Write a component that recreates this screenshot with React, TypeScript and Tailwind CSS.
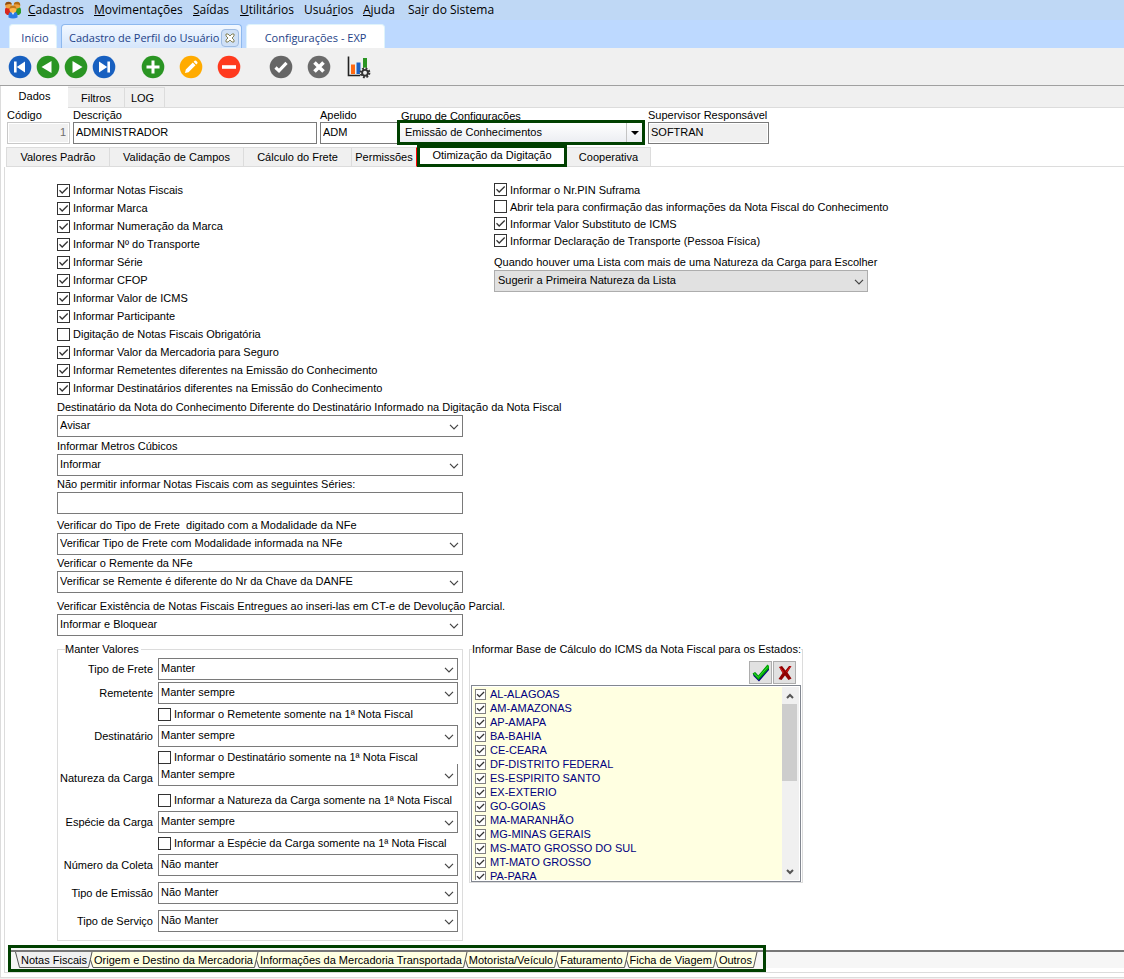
import { useState } from 'react';
import clsx from 'clsx';

const menuItems = [
  { before: '', key: 'C', after: 'adastros', width: 'w-[66px]' },
  { before: '', key: 'M', after: 'ovimentações', width: 'w-[99px]' },
  { before: '', key: 'S', after: 'aídas', width: 'w-[47px]' },
  { before: '', key: 'U', after: 'tilitários', width: 'w-[64px]' },
  { before: 'Usuá', key: 'r', after: 'ios', width: 'w-[59px]' },
  { before: '', key: 'A', after: 'juda', width: 'w-[45px]' },
  { before: 'Sa', key: 'i', after: 'r do Sistema', width: 'w-[90px]' },
];

const profileTabs = [
  { label: 'Valores Padrão', width: 'w-[104px]' },
  { label: 'Validação de Campos', width: 'w-[134px]' },
  { label: 'Cálculo do Frete', width: 'w-[108px]' },
  { label: 'Permissões', width: 'w-[65px]' },
  { label: 'Otimização da Digitação', width: 'w-[150px]' },
  { label: 'Cooperativa', width: 'w-[84px]' },
];

const leftChecks = [
  { label: 'Informar Notas Fiscais', checked: true },
  { label: 'Informar Marca', checked: true },
  { label: 'Informar Numeração da Marca', checked: true },
  { label: 'Informar Nº do Transporte', checked: true },
  { label: 'Informar Série', checked: true },
  { label: 'Informar CFOP', checked: true },
  { label: 'Informar Valor de ICMS', checked: true },
  { label: 'Informar Participante', checked: true },
  { label: 'Digitação de Notas Fiscais Obrigatória', checked: false },
  { label: 'Informar Valor da Mercadoria para Seguro', checked: true },
  { label: 'Informar Remetentes diferentes na Emissão do Conhecimento', checked: true },
  { label: 'Informar Destinatários diferentes na Emissão do Conhecimento', checked: true },
];

const rightChecks = [
  { label: 'Informar o Nr.PIN Suframa', checked: true },
  { label: 'Abrir tela para confirmação das informações da Nota Fiscal do Conhecimento', checked: false },
  { label: 'Informar Valor Substituto de ICMS', checked: true },
  { label: 'Informar Declaração de Transporte (Pessoa Física)', checked: true },
];

const states = [
  'AL-ALAGOAS',
  'AM-AMAZONAS',
  'AP-AMAPA',
  'BA-BAHIA',
  'CE-CEARA',
  'DF-DISTRITO FEDERAL',
  'ES-ESPIRITO SANTO',
  'EX-EXTERIO',
  'GO-GOIAS',
  'MA-MARANHÃO',
  'MG-MINAS GERAIS',
  'MS-MATO GROSSO DO SUL',
  'MT-MATO GROSSO',
  'PA-PARA',
];

const sheets = [
  'Notas Fiscais',
  'Origem e Destino da Mercadoria',
  'Informações da Mercadoria Transportada',
  'Motorista/Veículo',
  'Faturamento',
  'Ficha de Viagem',
  'Outros',
];

function Check({ label, checked, small }: { label: string; checked?: boolean; small?: boolean }) {
  return (
    <label className={clsx('flex items-center whitespace-nowrap', small ? 'gap-1 text-[#000080]' : 'gap-[3px]')}>
      <span className={clsx('relative shrink-0', small ? 'size-[11px]' : 'size-[13px]')}>
        <input
          type="checkbox"
          defaultChecked={checked}
          className={clsx('peer block size-full appearance-none border bg-white', small ? 'border-[#808080]' : 'border-[#333]')}
        />
        <svg viewBox="0 0 13 13" className="pointer-events-none absolute inset-0 hidden size-full peer-checked:block">
          <path d="M2.5 6.3 5.2 9 10.7 3.5" fill="none" stroke="#333" strokeWidth={small ? 1.6 : 1.3} />
        </svg>
      </span>
      <span>{label}</span>
    </label>
  );
}

function Combo({ id, value, gray, noTop }: { id: string; value: string; gray?: boolean; noTop?: boolean }) {
  return (
    <div className="relative">
      <select
        id={id}
        className={clsx(
          'block h-[22px] w-full appearance-none border pb-0.5 text-[11px]',
          gray ? 'border-[#adadad] bg-[#e1e1e1] pl-[3px]' : 'border-[#7a7a7a] bg-white pl-0.5',
          noTop && 'border-t-0',
        )}
      >
        <option>{value}</option>
      </select>
      <svg viewBox="0 0 10 6" className="pointer-events-none absolute top-[9px] right-1 h-[6px] w-[10px]">
        <path d="M1 .8 5 4.8 9 .8" fill="none" stroke="#444" strokeWidth="1.2" />
      </svg>
    </div>
  );
}

function Field({ id, label, value, className }: { id: string; label: string; value: string; className?: string }) {
  return (
    <div className={clsx('flex w-[406px] flex-col gap-px', className)}>
      <label htmlFor={id} className="h-[14px] whitespace-pre">{label}</label>
      <Combo id={id} value={value} />
    </div>
  );
}

function KeepRow({ id, label, value, noTop }: { id: string; label: string; value: string; noTop?: boolean }) {
  return (
    <div className="grid grid-cols-[95px_1fr] items-center gap-[5px]">
      <label htmlFor={id} className={clsx('text-right whitespace-nowrap', noTop ? 'pt-1.5' : 'pb-px')}>{label}</label>
      <Combo id={id} value={value} noTop={noTop} />
    </div>
  );
}

function RoundIcon({ color, children }: { color: string; children: React.ReactNode }) {
  return (
    <svg viewBox="0 0 24 24" className="size-6">
      <circle cx="12" cy="12" r="11.3" fill={color} />
      {children}
    </svg>
  );
}

function PeopleLogo() {
  return (
    <svg viewBox="0 0 18 18" className="h-[18px] w-[18px]">
      <path d="M1 12V9q0-3 3-3h2q2 0 2 3v5H3z" fill="#d8261c" />
      <path d="M10 14V9q0-3 2-3h2q3 0 3 3v3l-2 2z" fill="#2f9a2b" />
      <circle cx="4.5" cy="4.2" r="3.2" fill="#f0a13c" />
      <path d="M1.2 4.2Q1 .8 4.6.8q3 0 3.2 2.6Q5 2.6 3 3.4z" fill="#8f4d10" />
      <circle cx="13" cy="4.2" r="3.2" fill="#f0a13c" />
      <path d="M9.7 3.6Q10 .8 13.2.8q3.2.2 3 3.6-3-1.6-6.5-.8z" fill="#b06a12" />
      <path d="M4.5 16.5V14q0-3 3-3h3q3 0 3 3v2.5Q9 18.5 4.5 16.5z" fill="#2c7be5" />
      <path d="m7.5 11 1.5 3 1.5-3z" fill="#fff" />
      <circle cx="9" cy="8.3" r="3.5" fill="#ffb74d" />
      <path d="M5.5 7.8Q5.8 4.6 9 4.6t3.5 3.2Q9 6 5.5 7.8z" fill="#c07a1c" />
    </svg>
  );
}

function ChartGear() {
  return (
    <svg viewBox="0 0 24 24" className="size-6">
      <path d="M1.5 1.5v19H13" fill="none" stroke="#222" strokeWidth="1.6" />
      <rect x="4" y="9.5" width="4" height="9.5" fill="#ff6a13" />
      <rect x="9.5" y="7.5" width="4" height="11.5" fill="#1c62c4" />
      <rect x="16" y="3" width="4" height="11" fill="#2a9523" />
      <circle cx="18" cy="17.8" r="5.2" fill="#efefef" />
      <circle cx="18" cy="17.8" r="4.3" fill="none" stroke="#333" strokeWidth="2.2" strokeDasharray="1.8 1.577" />
      <circle cx="18" cy="17.8" r="2.9" fill="#efefef" stroke="#333" strokeWidth="1.9" />
    </svg>
  );
}

function Slant({ left, right }: { left: string; right?: string }) {
  return (
    <svg viewBox="0 0 7 16" className="h-4 w-[7px] shrink-0">
      <path d="M0 0H5L1.5 15.5H0z" fill={left} />
      {right && <path d="M5 0H7V15.5H6L3.5 8z" fill={right} />}
      <path d="M0 15.5H1.5L5 0" fill="none" stroke="#555" />
      {right && <path d="M3.5 8 6 15.500H7" fill="none" stroke="#555" />}
    </svg>
  );
}

export default function App() {
  const [sheet, setSheet] = useState(0);
  const sheetColor = (i: number) => (sheet === i ? '#f0f0f0' : '#ffffe1');

  return (
    <div className="flex min-h-screen flex-col overflow-hidden bg-[#f0f0f0] font-['Liberation_Sans',Arial,sans-serif] text-[11px] leading-[14px] text-black">
      {/* Menu */}
      <nav className="flex h-5 items-center bg-[#bfd8f5] pl-1 font-['Open_Sans','Segoe_UI',sans-serif] text-[12px]">
        <PeopleLogo />
        <div className="ml-1.5 flex">
          {menuItems.map((item) => (
            <button key={item.after} className={clsx('text-left whitespace-nowrap', item.width)}>
              {item.before}<u>{item.key}</u>{item.after}
            </button>
          ))}
        </div>
      </nav>

      {/* Open windows */}
      <div className="flex h-7 items-end gap-1 bg-[#bdd9ff] pl-[9px] font-['Open_Sans','Segoe_UI',sans-serif] text-[11px] text-[#1e4287]">
        <button className="h-6 w-12 rounded-t-sm border border-b-0 border-[#dff3fb] bg-white pt-0.5 pl-1">Início</button>
        <div className="flex h-6 w-[181px] items-center justify-between rounded-t-sm border border-b-0 border-[#8db8ee] bg-gradient-to-b from-[#f3f8ff] to-[#d5e6fb] pr-0.5 pl-[7px]">
          <button className="pt-0.5 whitespace-nowrap">Cadastro de Perfil do Usuário</button>
          <button aria-label="Fechar" className="mt-0.5 flex size-[18px] shrink-0 items-center justify-center rounded-sm border border-[#9ebbe2] bg-[#cfe0f6]">
            <svg viewBox="0 0 10 10" className="size-2.5">
              <path d="M1 1h2l2 2 2-2h2v2L7 5l2 2v2H7L5 7 3 9H1V7l2-2-2-2z" fill="#fff" stroke="#7a7748" strokeWidth=".9" />
            </svg>
          </button>
        </div>
        <button className="h-6 w-[139px] rounded-t-sm border border-b-0 border-[#dff3fb] bg-white pt-0.5">Configurações - EXP</button>
      </div>

      {/* Toolbar */}
      <div className="flex h-[38px] items-center border-b border-[#a0a0a0] pl-2">
        <div className="flex gap-1">
          <button aria-label="Primeiro">
            <RoundIcon color="#1860c0"><path d="M6 6.500h2.600v11H6zM8.800 12 17 6.500v11z" fill="#fff" /></RoundIcon>
          </button>
          <button aria-label="Anterior">
            <RoundIcon color="#2a9523"><path d="M5.500 12 15.500 6v12z" fill="#fff" /></RoundIcon>
          </button>
          <button aria-label="Próximo">
            <RoundIcon color="#2a9523"><path d="M18.500 12 8.500 6v12z" fill="#fff" /></RoundIcon>
          </button>
          <button aria-label="Último">
            <RoundIcon color="#1860c0"><path d="M15.400 6.500H18v11h-2.600zM15.200 12 7 6.500v11z" fill="#fff" /></RoundIcon>
          </button>
        </div>
        <div className="ml-[25px] flex gap-3.5">
          <button aria-label="Novo">
            <RoundIcon color="#2a9523"><path d="M12 5.500v13M5.500 12h13" stroke="#fff" strokeWidth="3" /></RoundIcon>
          </button>
          <button aria-label="Editar">
            <RoundIcon color="#ffab00">
              <path d="m6 18 .8-3.500 7-7 2.700 2.700-7 7zM14.600 6.700l1-1q.8-.6 1.500 0l1.200 1.200q.6.700 0 1.500l-1 1z" fill="#fff" />
            </RoundIcon>
          </button>
          <button aria-label="Excluir">
            <RoundIcon color="#ff3a1e"><path d="M5 12h14" stroke="#fff" strokeWidth="3.600" /></RoundIcon>
          </button>
        </div>
        <div className="ml-7 flex gap-3.5">
          <button aria-label="Confirmar">
            <RoundIcon color="#666"><path d="m6.500 12.500 3.500 3.300 7.500-8" fill="none" stroke="#fff" strokeWidth="3.200" /></RoundIcon>
          </button>
          <button aria-label="Cancelar">
            <RoundIcon color="#6b6b6b"><path d="m7.500 7.500 9 9m0-9-9 9" stroke="#fff" strokeWidth="3.600" /></RoundIcon>
          </button>
        </div>
        <button aria-label="Relatórios" className="ml-4"><ChartGear /></button>
      </div>

      {/* Record tabs */}
      <div className="flex h-[22px] items-end">
        <button className="h-[22px] w-[68px] border-l border-[#dcdcdc] bg-white pb-0.5">Dados</button>
        <div className="flex h-[21px] flex-1 border-b border-[#dcdcdc]">
          <button className="w-[57px] border-t border-r border-[#dcdcdc]">Filtros</button>
          <button className="w-10 border-t border-r border-[#dcdcdc] pr-1">LOG</button>
        </div>
      </div>

      <main className="flex flex-1 flex-col border-b border-l border-[#dcdcdc] bg-white">
        {/* Record header */}
        <div className="flex items-start gap-[3px] pl-1.5">
          <div className="flex w-[63px] flex-col">
            <label htmlFor="codigo">Código</label>
            <input id="codigo" disabled defaultValue="1" className="h-[22px] border border-[#c8c8c8] bg-[#f0f0f0] px-[3px] pb-0.5 text-right text-[#6d6d6d] ring-1 ring-white ring-inset" />
          </div>
          <div className="flex w-[244px] flex-col">
            <label htmlFor="descricao">Descrição</label>
            <input id="descricao" defaultValue="ADMINISTRADOR" className="h-[22px] border border-[#7a7a7a] px-0.5 pb-0.5" />
          </div>
          <div className="flex">
            <div className="flex w-[77px] flex-col">
              <label htmlFor="apelido">Apelido</label>
              <input id="apelido" defaultValue="ADM" className="h-[22px] border border-r-0 border-[#7a7a7a] px-0.5 pb-0.5" />
            </div>
            <div className="flex w-[248px] flex-col">
              <label htmlFor="grupo" className="h-3 pt-px pl-1">Grupo de Configurações</label>
              <div className="relative">
                <select id="grupo" className="block h-[25px] w-full appearance-none border-3 border-[#004000] bg-gradient-to-b from-white to-[#eceef2] pb-0.5 pl-[5px] text-[11px]">
                  <option>Emissão de Conhecimentos</option>
                </select>
                <span className="pointer-events-none absolute top-[3px] right-[3px] flex h-[19px] w-4 items-center justify-center border-l border-[#c4c4c4]">
                  <span className="border-x-4 border-t-4 border-x-transparent border-t-black" />
                </span>
              </div>
            </div>
          </div>
          <div className="flex w-[121px] flex-col">
            <label htmlFor="supervisor" className="whitespace-nowrap">Supervisor Responsável</label>
            <input id="supervisor" readOnly defaultValue="SOFTRAN" className="h-[22px] border border-[#7a7a7a] bg-[#f0f0f0] px-0.5 pb-0.5 ring-1 ring-white ring-inset" />
          </div>
        </div>

        {/* Profile tabs */}
        <div className="flex h-[22px] items-end pl-[5px]">
          {profileTabs.map((tab, i) =>
            i === 4 ? (
              <button key={tab.label} className={clsx('h-[22px] border-3 border-[#004000] bg-white pb-0.5 whitespace-nowrap', tab.width)}>
                {tab.label}
              </button>
            ) : (
              <button
                key={tab.label}
                className={clsx('h-5 border-t border-r border-b border-[#dcdcdc] bg-[#f0f0f0] whitespace-nowrap', tab.width, i === 0 && 'border-l', i === 3 && 'border-r-[#ff0000]')}
              >
                {tab.label}
              </button>
            ),
          )}
          <div className="flex-1 border-b border-[#dcdcdc]" />
        </div>

        <section className="mb-1 ml-[3px] flex flex-1 flex-col border-b border-l border-[#dcdcdc]">
          <div className="grid grid-cols-[437px_1fr] pt-3.5 pl-[52px]">
            <div>
              {leftChecks.map((item) => (
                <div key={item.label} className="flex h-[18px] items-center">
                  <Check {...item} />
                </div>
              ))}
              <Field id="destinatario-nota" className="mt-[3px]" label="Destinatário da Nota do Conhecimento Diferente do Destinatário Informado na Digitação da Nota Fiscal" value="Avisar" />
              <Field id="metros" className="mt-0.5" label="Informar Metros Cúbicos" value="Informar" />
              <div className="mt-px flex w-[406px] flex-col gap-px">
                <label htmlFor="series" className="h-[14px]">Não permitir informar Notas Fiscais com as seguintes Séries:</label>
                <input id="series" className="h-[22px] border border-[#7a7a7a] px-0.5" />
              </div>
              <Field id="tipo-frete-nfe" className="mt-1" label="Verificar do Tipo de Frete  digitado com a Modalidade da NFe" value="Verificar Tipo de Frete com Modalidade informada na NFe" />
              <Field id="remente" className="mt-px" label="Verificar o Remente da NFe" value="Verificar se Remente é diferente do Nr da Chave da DANFE" />
              <Field id="existencia" className="mt-1.5" label="Verificar Existência de Notas Fiscais Entregues ao inseri-las em CT-e de Devolução Parcial." value="Informar e Bloquear" />
            </div>

            <div>
              {rightChecks.map((item) => (
                <div key={item.label} className="flex h-[17px] items-center">
                  <Check {...item} />
                </div>
              ))}
              <div className="mt-1.5 flex w-[374px] flex-col gap-px">
                <label htmlFor="natureza-lista" className="h-[14px] whitespace-nowrap">Quando houver uma Lista com mais de uma Natureza da Carga para Escolher</label>
                <Combo id="natureza-lista" value="Sugerir a Primeira Natureza da Lista" gray />
              </div>
            </div>
          </div>

          <div className="mt-1.5 flex items-start gap-1.5 pl-[52px]">
            <fieldset className="w-[406px] border border-[#dcdcdc] pr-1 pb-2">
              <legend className="ml-[7px] pr-0.5">Manter Valores</legend>
              <div className="flex flex-col gap-0.5 pt-0.5">
                <KeepRow id="k-frete" label="Tipo de Frete" value="Manter" />
                <KeepRow id="k-remetente" label="Remetente" value="Manter sempre" />
              </div>
              <div className="flex h-[21px] items-end pb-1 pl-[100px]"><Check label="Informar o Remetente somente na 1ª Nota Fiscal" /></div>
              <KeepRow id="k-destinatario" label="Destinatário" value="Manter sempre" />
              <div className="flex h-[17px] items-end pl-[100px]"><Check label="Informar o Destinatário somente na 1ª Nota Fiscal" /></div>
              <KeepRow id="k-natureza" label="Natureza da Carga" value="Manter sempre" noTop />
              <div className="flex h-[25px] items-end pb-1 pl-[100px]"><Check label="Informar a Natureza da Carga somente na 1ª Nota Fiscal" /></div>
              <KeepRow id="k-especie" label="Espécie da Carga" value="Manter sempre" />
              <div className="flex h-[21px] items-end pb-1 pl-[100px]"><Check label="Informar a Espécie da Carga somente na 1ª Nota Fiscal" /></div>
              <div className="flex flex-col gap-1.5">
                <KeepRow id="k-coleta" label="Número da Coleta" value="Não manter" />
                <KeepRow id="k-emissao" label="Tipo de Emissão" value="Não Manter" />
                <KeepRow id="k-servico" label="Tipo de Serviço" value="Não Manter" />
              </div>
            </fieldset>

            <fieldset className="w-[334px] min-w-0 border border-[#dcdcdc] px-px">
              <legend className="ml-px whitespace-nowrap">Informar Base de Cálculo do ICMS da Nota Fiscal para os Estados:</legend>
              <div className="flex justify-end gap-px pt-[5px] pr-[5px] pb-px">
                <button aria-label="Marcar todos" className="flex size-[23px] items-center justify-center border border-[#adadad] bg-[#e1e1e1]">
                  <svg viewBox="0 0 18 18" className="size-[18px]">
                    <path d="m1 10 2.500-1.500L6.500 12 15.500 1 17 2.500V6L7 17.500 1.500 12z" fill="#000080" />
                    <path d="m.5 9.500 2.500-1.500 3.200 3.500L15.500.5 17 2v2.500L6.500 16z" fill="#00a800" />
                    <path d="m2 9.500 4.300 4L16 2.500" fill="none" stroke="#3fe03f" strokeWidth=".9" />
                  </svg>
                </button>
                <button aria-label="Desmarcar todos" className="flex size-[23px] items-center justify-center border border-[#adadad] bg-[#e1e1e1]">
                  <svg viewBox="0 0 14 16" className="h-4 w-3.5">
                    <path d="M1 2 4 1l3.500 4.500L11 1h2.500L9.500 7.500l4 6-3 1.500L7 10.500 3.500 15 .5 14l4-6z" fill="#900000" />
                    <path d="m2 2.500 3.500 5M12.500 1.500 8.500 7" stroke="#e02020" fill="none" />
                  </svg>
                </button>
              </div>
              <div className="flex h-[197px] border border-[#828790] p-px">
                <div className="flex-1 overflow-hidden bg-[#ffffe1] pl-0.5">
                  {states.map((state) => (
                    <div key={state} className="flex h-[14px] items-center">
                      <Check label={state} checked small />
                    </div>
                  ))}
                </div>
                <div className="flex w-[17px] flex-col bg-[#f0f0f0] pr-0.5">
                  <button aria-label="Rolar para cima" className="flex h-[17px] items-center justify-center">
                    <svg viewBox="0 0 8 6" className="h-1.5 w-2"><path d="M1 5 4 2l3 3" fill="none" stroke="#555" strokeWidth="2" /></svg>
                  </button>
                  <div className="h-[77px] bg-[#cdcdcd]" />
                  <button aria-label="Rolar para baixo" className="mt-auto flex h-[17px] items-center justify-center">
                    <svg viewBox="0 0 8 6" className="h-1.5 w-2"><path d="M1 1l3 3 3-3" fill="none" stroke="#555" strokeWidth="2" /></svg>
                  </button>
                </div>
              </div>
            </fieldset>
          </div>

          {/* Sheet tabs */}
          <div className="mt-1 flex pl-[3px]">
            <div className="flex h-[27px] w-[758px] border-3 border-[#004000] bg-[#f6f6f6] pt-0.5">
              <div className="flex flex-1 border-t-2 border-[#777]">
                <svg viewBox="0 0 10 16" className="h-4 w-2.5 shrink-0">
                  <path d="M4.500 0 8.500 15.500H10V0z" fill={sheetColor(0)} />
                  <path d="M4.500 0 8.500 15.500H10" fill="none" stroke="#555" />
                </svg>
                {sheets.map((label, i) => (
                  <div key={label} className="flex">
                    <button
                      onClick={() => setSheet(i)}
                      className={clsx('h-4 border-b border-[#555] whitespace-nowrap', sheet === i ? 'bg-[#f0f0f0]' : 'bg-[#ffffe1]')}
                    >
                      {label}
                    </button>
                    <Slant left={sheetColor(i)} right={i < sheets.length - 1 ? sheetColor(i + 1) : undefined} />
                  </div>
                ))}
              </div>
            </div>
            <div className="mt-[5px] mb-1 flex-1 border-t-2 border-[#777] bg-[#f6f6f6]" />
          </div>
        </section>
      </main>
      <div className="h-0.5 shrink-0" />
    </div>
  );
}
